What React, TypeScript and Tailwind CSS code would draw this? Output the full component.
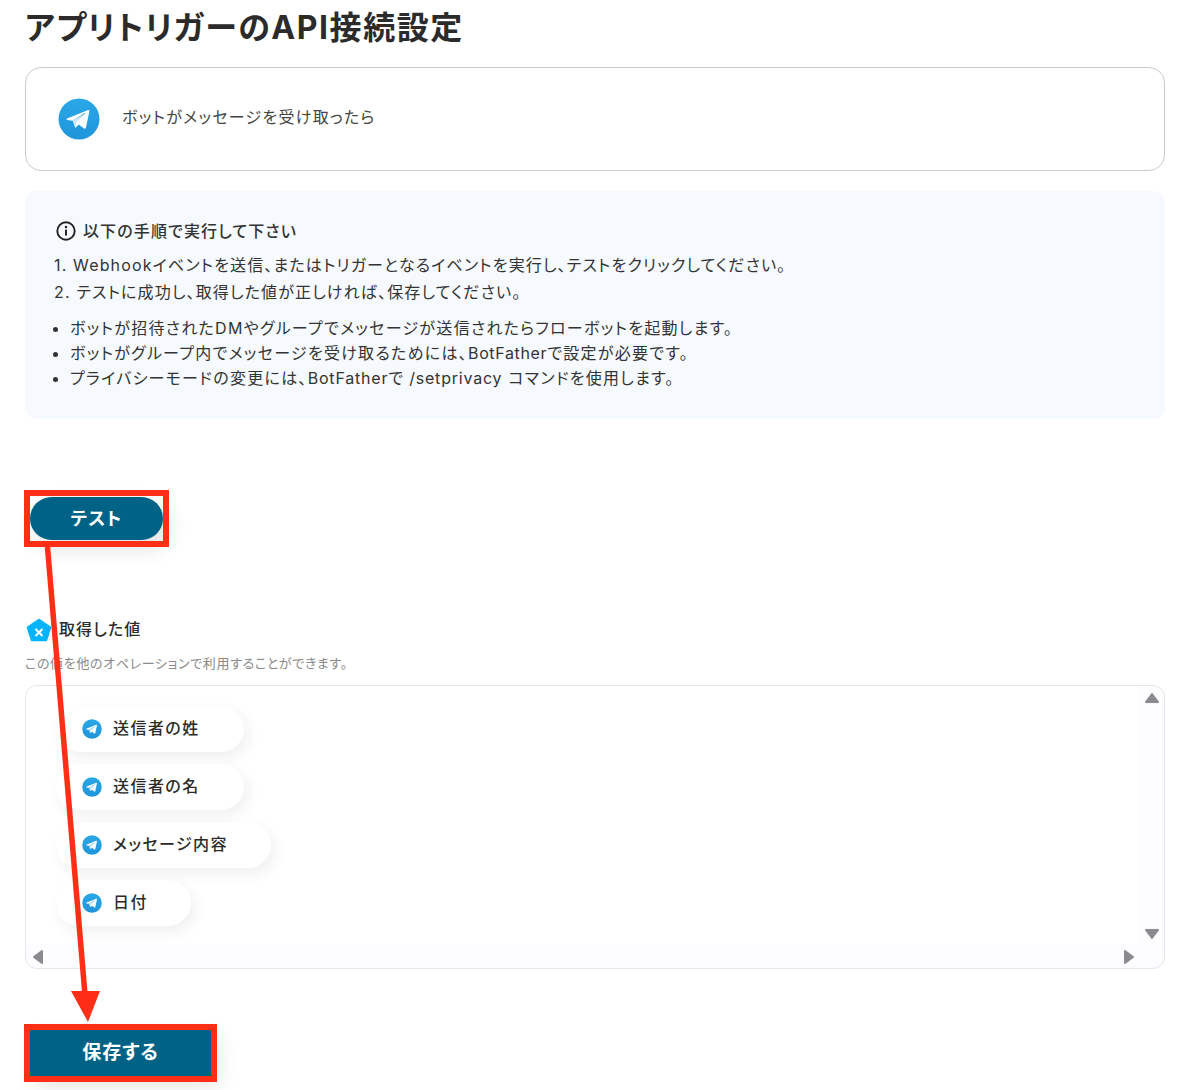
import React from "react";

const font = "[font-family:Inter,'Noto_Sans_CJK_JP',sans-serif] [font-feature-settings:'palt'] tracking-[0.07em]";

function TelegramIcon({ size }: { size: number }) {
  return (
    <svg width={size} height={size} viewBox="0 0 42 42" className="shrink-0">
      <defs>
        <linearGradient id="tg" x1="0.5" y1="0" x2="0.5" y2="1">
          <stop offset="0" stopColor="#2AA8E8" />
          <stop offset="1" stopColor="#1f94da" />
        </linearGradient>
      </defs>
      <circle cx="21" cy="21" r="20.5" fill="url(#tg)" />
      <path
        d="M9 20.6 L29.6 12.2 C31 11.7 31.6 12.3 31.3 13.8 L28 29.6 C27.7 30.8 27 31 26 30.4 L20.8 26.6 L18.3 29 C17.9 29.4 17.5 29.6 17 29.6 L17.4 24 L27.2 15.4 C27.6 15 27.1 14.8 26.6 15.1 L14.6 22.7 L9.4 21.9 C8.3 21.6 8.3 21 9 20.6 Z"
        fill="#fff"
      />
      <path d="M14.6 22.7 L17 29.6 L17.4 24 L27.2 15.4 Z" fill="#d6e6f2" />
    </svg>
  );
}

function ValueChip({ label, width }: { label: string; width: string }) {
  return (
    <div
      className={`flex h-[46px] ${width} items-center rounded-full bg-white pl-[26px] shadow-[4px_6px_14px_rgba(40,40,60,0.07)]`}
    >
      <TelegramIcon size={20} />
      <span className="ml-[11px] -translate-y-px text-[16px] font-medium tracking-[0.09em] text-[#2b2b2b]">{label}</span>
    </div>
  );
}

function ScrollArrow({ d, className }: { d: string; className: string }) {
  return (
    <svg width="16" height="16" viewBox="0 0 16 16" className={`absolute ${className}`}>
      <path d={d} fill="#8c8a8e" stroke="#8c8a8e" strokeWidth="2" strokeLinejoin="round" />
    </svg>
  );
}

export default function App() {
  return (
    <div className={`relative h-[1090px] w-[1195px] overflow-hidden bg-white pl-[25px] ${font}`}>
      <div className="w-[1140px]">
        <h1 className="h-[67px] pt-[6px] text-[32px] font-bold leading-[44px] tracking-[1.54px] text-[#2b2b2b]">
          アプリトリガーのAPI接続設定
        </h1>

        <div className="flex h-[104px] items-center rounded-[16px] border border-[#cccccc] pl-[32px]">
          <TelegramIcon size={42} />
          <span className="ml-[22px] -translate-y-[2px] text-[16px] tracking-[0.08em] text-[#444444]">ボットがメッセージを受け取ったら</span>
        </div>

        <div className="mt-[20px] h-[228px] rounded-[12px] bg-[#f6f9fd] pl-[29px] pt-[28px] text-[16px] text-[#333333]">
          <div className="flex h-[24px] items-center font-medium">
            <svg width="20" height="20" viewBox="0 0 20 20" fill="none" className="ml-[2px] mr-[7px]">
              <circle cx="10" cy="10" r="8.7" stroke="#222" strokeWidth="1.9" />
              <rect x="9" y="8.6" width="2" height="6" fill="#222" />
              <circle cx="10" cy="6.1" r="1.25" fill="#222" />
            </svg>
            以下の手順で実行して下さい
          </div>
          <ol className="mt-[9px] leading-[27px] tracking-[0.072em]">
            <li>1. Webhookイベントを送信、またはトリガーとなるイベントを実行し、テストをクリックしてください。</li>
            <li>2. テストに成功し、取得した値が正しければ、保存してください。</li>
          </ol>
          <ul className="mt-[10px] list-disc pl-[16px] leading-[25px] tracking-[0.08em]">
            <li>ボットが招待されたDMやグループでメッセージが送信されたらフローボットを起動します。</li>
            <li>
              ボットがグループ内でメッセージを受け取るためには、<span className="tracking-[0.04em]">BotFather</span>で設定が必要です。
            </li>
            <li>
              プライバシーモードの変更には、<span className="tracking-[0.05em]">BotFatherで /setprivacy</span> コマンドを使用します。
            </li>
          </ul>
        </div>

        <div className="ml-[5px] mt-[78px] flex h-[43px] w-[133px] items-center justify-center rounded-full bg-[#006385] text-[18px] font-bold text-white shadow-[6px_8px_20px_rgba(40,40,60,0.15)]">
          テスト
        </div>

        <div className="mt-[77px] flex h-[26px] items-center">
          <svg width="28" height="26" viewBox="0 0 28 26" className="shrink-0">
            <path d="M14 3 L25 10.5 L21 23 L7 23 L3 10.5 Z" fill="#00b4ff" stroke="#00b4ff" strokeWidth="2.5" strokeLinejoin="round" />
            <path d="M10.5 12 L17.5 19 M17.5 12 L10.5 19" stroke="#fff" strokeWidth="2" />
          </svg>
          <span className="ml-[6px] -translate-y-px text-[16px] font-medium text-[#2b2b2b]">取得した値</span>
        </div>
        <p className="mt-[11px] text-[13px] leading-[18px] tracking-[0.05em] text-[#8a8a8a]">この値を他のオペレーションで利用することができます。</p>

        <div className="relative mt-[13px] h-[284px] rounded-[12px] border border-[#e6e6ea] bg-[#fdfcfe]">
          <div className="flex h-[258px] w-[1112px] flex-col gap-[12px] rounded-tl-[12px] bg-white pl-[30px] pt-[20px]">
            <ValueChip label="送信者の姓" width="w-[188px]" />
            <ValueChip label="送信者の名" width="w-[188px]" />
            <ValueChip label="メッセージ内容" width="w-[215px]" />
            <ValueChip label="日付" width="w-[135px]" />
          </div>
          {/* scrollbar arrows */}
          <ScrollArrow d="M8 4 L14 12 L2 12 Z" className="right-[4px] top-[4px]" />
          <ScrollArrow d="M2 4 L14 4 L8 12 Z" className="right-[4px] top-[240px]" />
          <ScrollArrow d="M12 2 L12 14 L4 8 Z" className="left-[4px] top-[263px]" />
          <ScrollArrow d="M4 2 L12 8 L4 14 Z" className="right-[27px] top-[263px]" />
        </div>

        <div className="ml-[5px] mt-[61px] flex h-[46px] w-[181px] items-center justify-center bg-[#006385] text-[19px] font-bold tracking-[0.05em] text-white shadow-[6px_8px_20px_rgba(40,40,60,0.15)]">
          保存する
        </div>
      </div>

      {/* annotations drawn over the page */}
      <div className="absolute left-[24px] top-[490px] h-[57px] w-[145px] border-[6px] border-[#ff2e17]" />
      <div className="absolute left-[24px] top-[1024px] h-[58px] w-[193px] border-[6px] border-[#ff2e17]" />
      <svg width="1195" height="1090" className="pointer-events-none absolute left-0 top-0">
        <path d="M47.5 547 L85 995" stroke="#ff2e17" strokeWidth="5.5" />
        <path d="M71 991 L100 991 L88 1022 Z" fill="#ff2e17" />
      </svg>
    </div>
  );
}
